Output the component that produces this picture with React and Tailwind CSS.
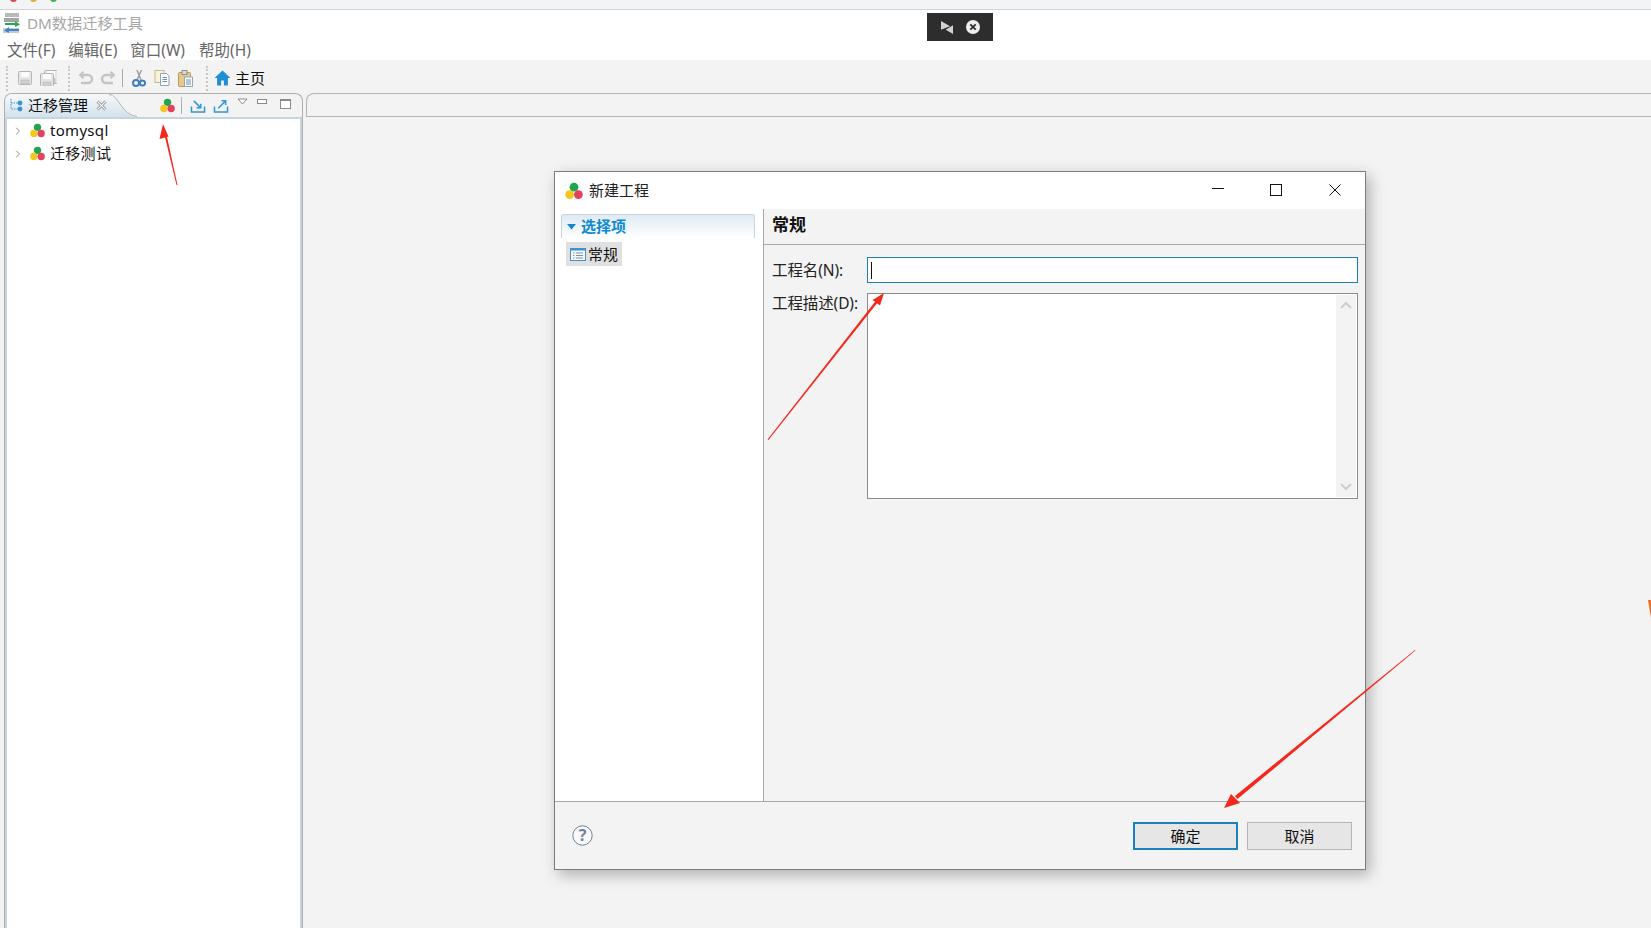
import { ChevronRight } from "lucide-react";

const font = { fontFamily: '"Noto Sans", "Noto Sans CJK SC", sans-serif' };

const Logo = ({ size = 16 }) => (
  <svg width={size} height={size} viewBox="0 0 16 16" className="shrink-0">
    <circle cx="8" cy="4.6" r="3.9" fill="#1ea64a" />
    <circle cx="4.1" cy="11.2" r="3.9" fill="#f2c81e" />
    <circle cx="11.9" cy="11.2" r="3.9" fill="#e4415f" />
  </svg>
);

const Grip = ({ className }) => (
  <div className={`w-[2px] h-[25px] border-l-2 border-dotted border-[#c8c8c8] ${className}`} />
);

const AppIcon = () => (
  <svg width="18" height="22" viewBox="0 0 18 22" className="shrink-0">
    <rect x="2" y="0" width="14" height="4" fill="#b9b9b9" />
    <rect x="1" y="5" width="15" height="4" fill="#a5a5a5" />
    <rect x="0" y="15" width="16" height="5" fill="#c9c9c9" />
    <path d="M2 10h10V8l5 3.5-5 2.5v-2H2z" fill="#25a84a" />
    <path d="M16 16H6v-2l-5 3.5L6 20v-2h10z" fill="#3b86d0" />
  </svg>
);

const SaveIcon = ({ x = 0, y = 0 }) => (
  <g transform={`translate(${x} ${y})`}>
    <rect x="0.5" y="0.5" width="13" height="13" rx="1" fill="#e6e6e6" stroke="#b4b4b4" />
    <rect x="3" y="1" width="8" height="5" fill="#fbfbfb" />
    <rect x="3" y="9" width="8" height="4" fill="#cfcfcf" stroke="#b4b4b4" strokeWidth="0.6" />
  </g>
);

const Toolbar = () => (
  <div className="h-[32px] bg-[#f3f3f3] flex items-center pl-[6px] pt-[2px] mt-[1px] shrink-0">
    <Grip className="mr-[9px]" />
    <svg width="16" height="16" viewBox="0 0 16 16" className="mr-[7px]">
      <SaveIcon x={1} y={1} />
    </svg>
    <svg width="17" height="16" viewBox="0 0 17 16">
      <SaveIcon x={4} y={0} />
      <SaveIcon x={0} y={3} />
    </svg>
    <Grip className="ml-[11px] mr-[8px]" />
    <svg width="16" height="14" viewBox="0 0 16 14" className="mr-[6px]" fill="none" stroke="#c4c4c4" strokeWidth="2.4">
      <path d="M3 4h7a4 4 0 0 1 0 8H3" />
      <path d="M5.5 0.8 2 4l3.5 3.2" strokeWidth="2" />
    </svg>
    <svg width="16" height="14" viewBox="0 0 16 14" fill="none" stroke="#c4c4c4" strokeWidth="2.4">
      <path d="M13 4H6a4 4 0 0 0 0 8h7" />
      <path d="M10.5 0.8 14 4l-3.5 3.2" strokeWidth="2" />
    </svg>
    <div className="w-[1px] h-[18px] bg-[#a8a8a8] ml-[6px] mr-[9px]" />
    <svg width="14" height="17" viewBox="0 0 14 17" className="mr-[8px]">
      <path d="M9.5 0 5 10M5 0l4 10" stroke="#9a9a9a" strokeWidth="1.4" fill="none" />
      <circle cx="4" cy="13" r="3" fill="none" stroke="#3f7fc0" strokeWidth="2" />
      <circle cx="10.5" cy="13" r="2.6" fill="none" stroke="#3f7fc0" strokeWidth="2" />
    </svg>
    <svg width="16" height="16" viewBox="0 0 16 16" className="mr-[8px]">
      <rect x="1" y="0.5" width="9" height="12" fill="#faf3dc" stroke="#c9b987" />
      <path d="M6.5 3.5h6l2.5 2.5v9.5H6.5z" fill="#fdfdfd" stroke="#8ca6bd" />
      <path d="M8.5 7.5h4.5M8.5 9.5h4.5M8.5 11.5h4.5" stroke="#6e8eb0" />
    </svg>
    <svg width="15" height="17" viewBox="0 0 15 17">
      <rect x="0.5" y="2.5" width="12" height="14" rx="1" fill="#e9c98b" stroke="#b8955a" />
      <rect x="4" y="0.5" width="5" height="4" fill="#d9d9d9" stroke="#8f8f8f" />
      <path d="M6.5 7h8v9.5h-8z" fill="#fdfdfd" stroke="#8ca6bd" />
      <path d="M8 10h5M8 12h5M8 14h5" stroke="#6e8eb0" />
    </svg>
    <Grip className="ml-[13px] mr-[6px]" />
    <svg width="17" height="16" viewBox="0 0 17 16" className="mr-[4px]">
      <path d="M8.5 0.5 0.5 8h2.6v7.5h4V10.5h2.8v5h4V8h2.6z" fill="#1e8fd5" />
    </svg>
    <span className="text-[15px] text-[#111]">主页</span>
  </div>
);

const ViewTab = () => (
  <div className="flex h-[23px] shrink-0">
    <div className="w-[105px] shrink-0 rounded-tl-[7px] bg-gradient-to-b from-[#f6f9fb] to-[#d3e2ec] flex items-center pl-[5px] pb-[1px] gap-[4px]">
      <svg width="14" height="14" viewBox="0 0 14 14" className="shrink-0">
        <path d="M1 1v10h7M1 5h7" fill="none" stroke="#2f8fd0" strokeDasharray="1.4 1.2" />
        <circle cx="10" cy="5" r="2.4" fill="#3d93d2" />
        <circle cx="10" cy="11" r="2.4" fill="#3d93d2" />
      </svg>
      <span className="text-[15px] text-[#111] leading-none whitespace-nowrap">迁移管理</span>
      <svg width="11" height="11" viewBox="0 0 11 11" className="ml-[4px] shrink-0">
        <path d="M1.5 1.5 9.5 9.5M9.5 1.5 1.5 9.5" stroke="#8a8a8a" strokeWidth="2.8" />
        <path d="M1.5 1.5 9.5 9.5M9.5 1.5 1.5 9.5" stroke="#f4f4f4" strokeWidth="1.1" />
      </svg>
    </div>
    <svg width="28" height="23" viewBox="0 0 28 24" preserveAspectRatio="none" className="shrink-0 -ml-[1px]">
      <defs>
        <linearGradient id="tabfill" x1="0" y1="0" x2="0" y2="1">
          <stop offset="0" stopColor="#f6f9fb" />
          <stop offset="1" stopColor="#d3e2ec" />
        </linearGradient>
      </defs>
      <path d="M0 0C10 0 12 22 28 24H0z" fill="url(#tabfill)" />
      <path d="M0 0.5C10 0.5 12 22 28 23.5" fill="none" stroke="#b4b4b4" />
    </svg>
    <div className="flex-1 flex items-start pl-[23px] pt-[4px]">
      <Logo size={15} />
      <div className="w-[1px] h-[17px] bg-[#b0b0b0] ml-[6px] mr-[8px] -mt-[1px]" />
      <svg width="16" height="14" viewBox="0 0 16 15" className="mr-[7px] mt-[1px]" fill="none" stroke="#2f96d8" strokeWidth="1.6">
        <path d="M1 8v6h14V8" />
        <path d="M3.5 2 11 9.5M11 5v4.5H6.5" />
      </svg>
      <svg width="16" height="14" viewBox="0 0 16 15" className="mr-[8px] mt-[1px]" fill="none" stroke="#2f96d8" strokeWidth="1.6">
        <path d="M1 8v6h14V8" />
        <path d="M5 10 13 2M8.5 2H13v4.5" />
      </svg>
      <svg width="11" height="7" viewBox="0 0 11 7" className="mr-[9px]">
        <path d="M1 1h9L5.5 6z" fill="#fff" stroke="#8a8a8a" />
      </svg>
      <div className="w-[10px] h-[5px] border border-[#8a8a8a] bg-white mr-[13px] mt-[1px]" />
      <div className="w-[11px] h-[10px] border border-[#8a8a8a] border-t-2 bg-white mt-[1px]" />
    </div>
  </div>
);

const TreeRow = ({ label }) => (
  <div className="h-[23px] flex items-center pl-[5px]">
    <ChevronRight size={12} strokeWidth={2} className="text-[#8a8a8a] mr-[6px] shrink-0" />
    <Logo size={15} />
    <span className="ml-[5px] text-[15px] tracking-[0.3px] text-[#111]">{label}</span>
  </div>
);

const LeftPanel = () => (
  <div className="w-[299px] ml-[4px] shrink-0 flex flex-col border-l border-r border-t border-[#aeaeae] rounded-t-[8px]">
    <ViewTab />
    <div className="flex-1 bg-white border-x-2 border-t-2 border-[#c5d5e0]">
      <TreeRow label="tomysql" />
      <TreeRow label="迁移测试" />
    </div>
  </div>
);

const WindowButtons = () => (
  <div className="flex items-center ml-auto pb-[2px]">
    <div className="w-[12px] h-[1.5px] bg-[#111] mr-[46px] -mt-[2px]" />
    <div className="w-[12px] h-[12px] border-[1.5px] border-[#111] mr-[47px]" />
    <svg width="12" height="12" viewBox="0 0 12 12" className="mr-[24px]">
      <path d="M0.5 0.5 11.5 11.5M11.5 0.5 0.5 11.5" stroke="#111" strokeWidth="1" />
    </svg>
  </div>
);

const Dialog = () => (
  <div className="absolute left-[554px] top-[171px] w-[812px] h-[699px] flex flex-col border border-[#7c7c7c] bg-[#f3f3f3] shadow-[4px_5px_14px_rgba(0,0,0,0.28)]">
    <div className="h-[37px] bg-white flex items-center pl-[10px] shrink-0">
      <Logo size={18} />
      <span className="ml-[6px] text-[15px] text-[#222]">新建工程</span>
      <WindowButtons />
    </div>
    <div className="flex-1 flex min-h-0">
      <div className="w-[209px] shrink-0 bg-white border-r border-[#a8a8a8] pl-[6px] pr-[8px] pt-[5px]">
        <div className="h-[24px] rounded-t-[3px] border-t border-x border-[#c9d7e2] bg-gradient-to-b from-[#dfeaf3] to-white flex items-center pl-[5px] gap-[5px]">
          <svg width="9" height="6" viewBox="0 0 9 6">
            <path d="M0 0h9L4.5 5.5z" fill="#0d8ad2" />
          </svg>
          <span className="text-[15px] font-bold text-[#0d8ad2] leading-none">选择项</span>
        </div>
        <div className="mt-[4px] ml-[5px] w-[56px] h-[24px] bg-[#e0e0e0] flex items-center pl-[4px] gap-[2px]">
          <svg width="16" height="13" viewBox="0 0 16 13" className="shrink-0">
            <rect x="0.5" y="0.5" width="15" height="12" fill="#f6f8fa" stroke="#3d93d2" />
            <rect x="0.5" y="0.5" width="15" height="2" fill="#3d93d2" />
            <path d="M3 5h1.5M6 5h7M3 7.5h1.5M6 7.5h7M3 10h1.5M6 10h7" stroke="#7f8e9b" />
          </svg>
          <span className="text-[15px] text-[#111] leading-none">常规</span>
        </div>
      </div>
      <div className="flex-1 flex flex-col min-w-0">
        <div className="h-[36px] border-b border-[#a8a8a8] flex items-center pl-[8px] pb-[4px] shrink-0">
          <span className="text-[17px] font-bold text-[#111] leading-none">常规</span>
        </div>
        <div className="grid grid-cols-[95px_491px] gap-y-[10px] pl-[8px] pt-[12px] text-[15.5px] tracking-[-0.1px] text-[#222]">
          <span className="leading-[26px] whitespace-nowrap">工程名(N):</span>
          <div className="h-[26px] bg-white border-[1.5px] border-[#1a7fb5] flex items-center pl-[3px]">
            <div className="w-[1px] h-[17px] bg-[#111]" />
          </div>
          <span className="leading-[20px] whitespace-nowrap">工程描述(D):</span>
          <div className="h-[206px] bg-white border border-[#8a8a8a] flex justify-end pr-[1px] py-[1px]">
            <div className="w-[20px] bg-[#f3f3f3] flex flex-col items-center justify-between py-[6px]">
              <svg width="12" height="8" viewBox="0 0 12 8" fill="none" stroke="#cdcdcd" strokeWidth="2">
                <path d="M1 7l5-5 5 5" />
              </svg>
              <svg width="12" height="8" viewBox="0 0 12 8" fill="none" stroke="#cdcdcd" strokeWidth="2">
                <path d="M1 1l5 5 5-5" />
              </svg>
            </div>
          </div>
        </div>
      </div>
    </div>
    <div className="h-[68px] border-t border-[#a8a8a8] shrink-0 flex items-center pl-[17px] pr-[13px] pt-[1px]">
      <svg width="21" height="21" viewBox="0 0 21 21" className="-mt-[2px]">
        <circle cx="10.5" cy="10.5" r="9.7" fill="#f8f9fb" stroke="#6f8299" />
        <text x="10.5" y="16" textAnchor="middle" fontSize="16" fontWeight="700" fill="#6f8299" style={font}>?</text>
      </svg>
      <button className="ml-auto w-[105px] h-[28px] bg-[#e6e6e6] border-[2px] border-[#1a80bf] text-[15px] text-[#111]">确定</button>
      <button className="ml-[9px] w-[105px] h-[28px] bg-[#e6e6e6] border border-[#b4b4b4] text-[15px] text-[#111]">取消</button>
    </div>
  </div>
);

const Arrows = () => (
  <svg width="1651" height="928" viewBox="0 0 1651 928" className="absolute left-0 top-0 pointer-events-none">
    <g fill="#f5281c">
      <path d="M177.5 185 176.5 185 164.5 135 166.5 134.5z" />
      <path d="M163 124 159.5 139 168.5 136.5z" />
      <path d="M768.5 440 767.5 439.5 876 300.5 878 302z" />
      <path d="M884 293 872.5 300 880 305.5z" />
      <path d="M1415.5 650.5 1415 650 1235 796 1237.5 799z" />
      <path d="M1224 808 1231 794 1240 803z" />
    </g>
    <path d="M1651 600 1648 600 1651 618z" fill="#f26a2a" />
  </svg>
);

const CaptureBar = () => (
  <div className="absolute left-[927px] top-[13px] w-[66px] h-[28px] bg-[#2d2d2d] flex items-center pl-[14px] gap-[13px]">
    <svg width="12" height="13" viewBox="0 0 12 13" fill="#d2d2d2">
      <path d="M0 0v8.7l9-3.4zM12 4.3V13L4.7 8.7z" />
    </svg>
    <svg width="14" height="14" viewBox="0 0 14 14">
      <circle cx="7" cy="7" r="7" fill="#eeeeee" />
      <path d="M4.3 4.3l5.4 5.4M9.7 4.3 4.3 9.7" stroke="#2d2d2d" strokeWidth="1.8" />
    </svg>
  </div>
);

export default function App() {
  return (
    <div style={font} className="relative w-[1651px] h-[928px] overflow-hidden bg-[#f3f3f3] flex flex-col">
      <div className="relative h-[10px] bg-[#f3f4f6] border-b border-[#d4d4d4] shrink-0 flex items-start pl-[10px] gap-[13px] overflow-hidden">
        <div className="w-[7px] h-[7px] rounded-full bg-[#e0463c] -mt-[5px]" />
        <div className="w-[7px] h-[7px] rounded-full bg-[#e8a93a] -mt-[5px]" />
        <div className="w-[7px] h-[7px] rounded-full bg-[#3fb24f] -mt-[5px]" />
      </div>
      <div className="h-[50px] bg-white shrink-0">
        <div className="h-[27px] flex items-center pl-[3px]">
          <AppIcon />
          <span className="ml-[6px] text-[15.2px] text-[#a6a6a6]">DM数据迁移工具</span>
        </div>
        <div className="h-[23px] flex items-center pl-[7px] pt-[4px] text-[15.5px] text-[#666]">
          <span className="mr-[13px]">文件(F)</span>
          <span className="mr-[13px]">编辑(E)</span>
          <span className="mr-[14px]">窗口(W)</span>
          <span>帮助(H)</span>
        </div>
      </div>
      <Toolbar />
      <div className="flex-1 flex min-h-0">
        <LeftPanel />
        <div className="flex-1 ml-[3px] h-[24px] border-l border-t border-b border-[#b4b4b4] rounded-tl-[8px]" />
      </div>
      <CaptureBar />
      <Dialog />
      <Arrows />
    </div>
  );
}
